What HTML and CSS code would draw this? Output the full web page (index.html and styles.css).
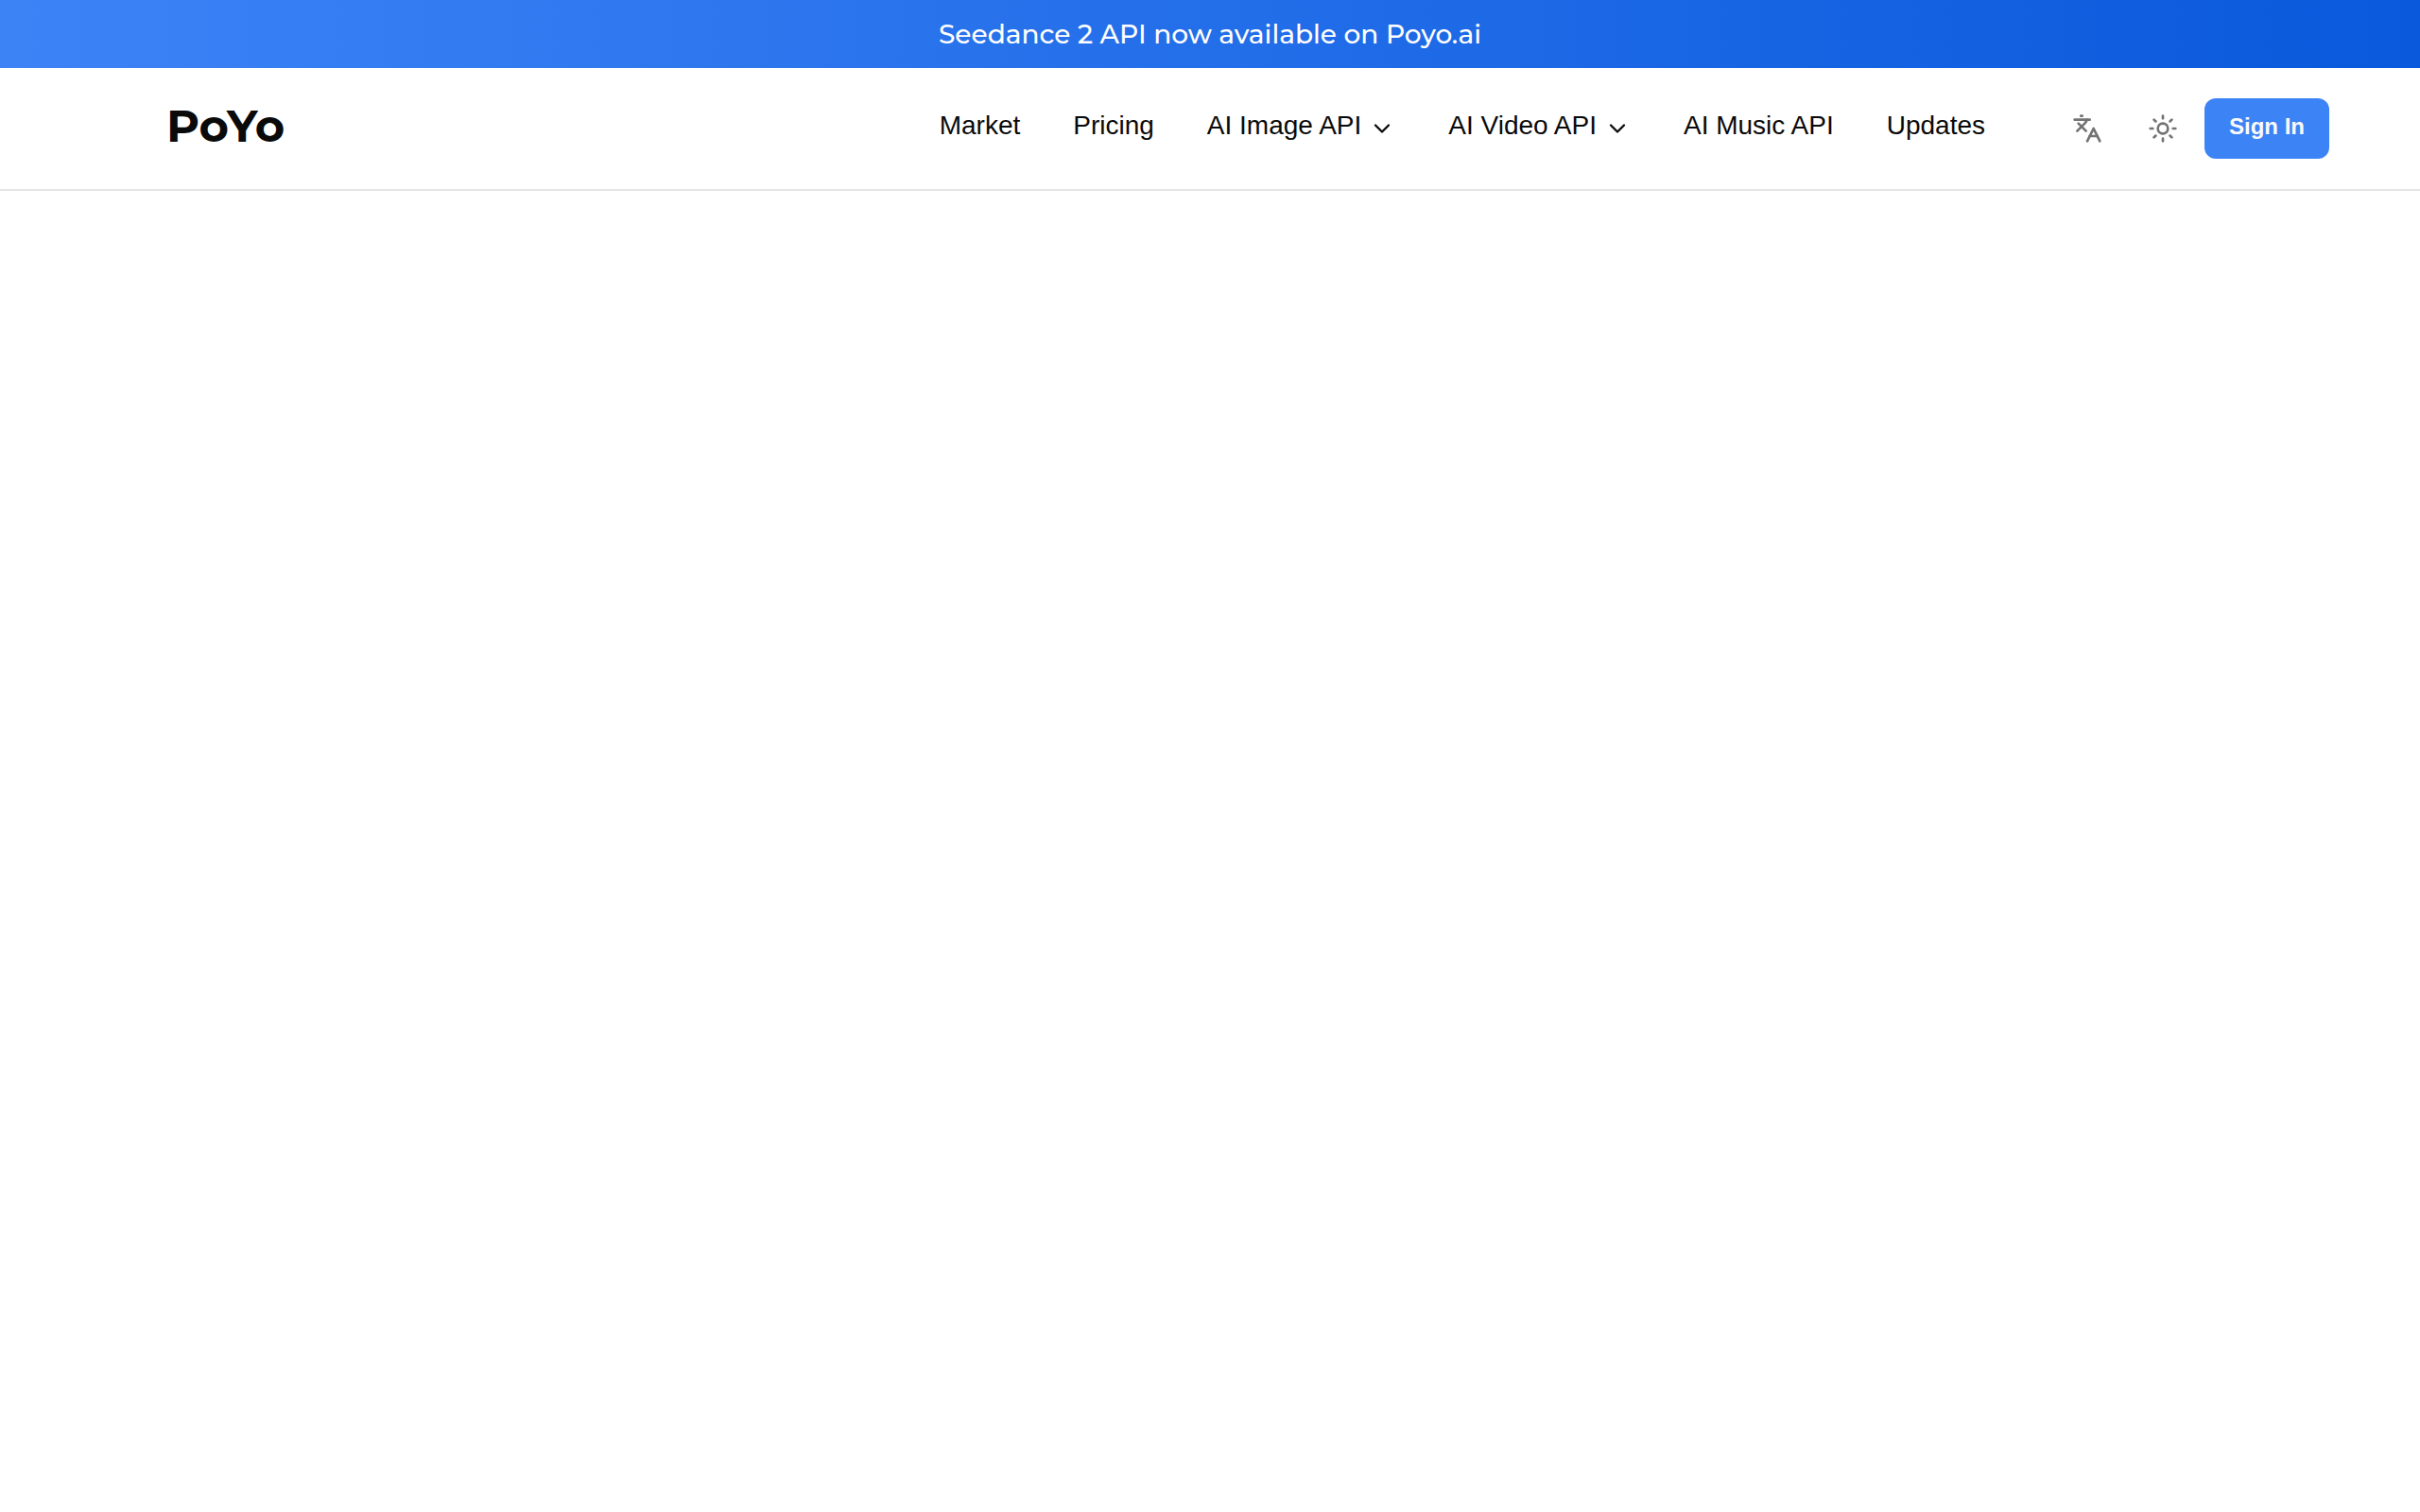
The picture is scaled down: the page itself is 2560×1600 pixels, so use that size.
FILE: index.html
```
<!DOCTYPE html>
<html lang="en">
<head>
    <meta charset="UTF-8">
    <meta name="viewport" content="width=device-width, initial-scale=1.0">
    <title>PoYo</title>
    <link rel="stylesheet" href="styles.css">
</head>
<body>
    <a class="banner" href="#">Seedance 2 API now available on Poyo.ai</a>

    <header class="header">
        <a class="logo" href="#">PoYo</a>

        <nav class="nav">
            <a class="nav-item" href="#">Market</a>
            <a class="nav-item" href="#">Pricing</a>
            <button class="nav-item" type="button">
                <span>AI Image API</span>
                <svg class="chevron" viewBox="0 0 24 24"><path d="m6 9 6 6 6-6"/></svg>
            </button>
            <button class="nav-item" type="button">
                <span>AI Video API</span>
                <svg class="chevron" viewBox="0 0 24 24"><path d="m6 9 6 6 6-6"/></svg>
            </button>
            <a class="nav-item" href="#">AI Music API</a>
            <a class="nav-item" href="#">Updates</a>
        </nav>

        <div class="actions">
            <button class="icon-btn" type="button" aria-label="Language">
                <svg viewBox="0 0 24 24">
                    <path d="m5 8 6 6"/>
                    <path d="m4 14 6-6 2-3"/>
                    <path d="M2 5h12"/>
                    <path d="M7 2h1"/>
                    <path d="m22 22-5-10-5 10"/>
                    <path d="M14 18h6"/>
                </svg>
            </button>
            <button class="icon-btn" type="button" aria-label="Theme">
                <svg viewBox="0 0 24 24">
                    <circle cx="12" cy="12" r="4"/>
                    <path d="M12 2v2"/>
                    <path d="M12 20v2"/>
                    <path d="m4.93 4.93 1.41 1.41"/>
                    <path d="m17.66 17.66 1.41 1.41"/>
                    <path d="M2 12h2"/>
                    <path d="M20 12h2"/>
                    <path d="m6.34 17.66-1.41 1.41"/>
                    <path d="m19.07 4.93-1.41 1.41"/>
                </svg>
            </button>
            <button class="sign-in" type="button">Sign In</button>
        </div>
    </header>

    <main></main>
</body>
</html>
```
FILE: styles.css
```
:root {
    --primary: #3c83f6;
    --primary-dark: #0a59dc;
    --text: #0a0a0a;
    --muted: #737373;
    --border: #e5e5e5;
}

* {
    margin: 0;
    padding: 0;
    box-sizing: border-box;
}

body {
    min-height: 100vh;
    background: #fff;
    color: var(--text);
    font-family: "Liberation Sans", Arial, sans-serif;
    font-size: 28px;
    line-height: 40px;
}

a {
    color: inherit;
    text-decoration: none;
}

button {
    border: none;
    background: none;
    color: inherit;
    font: inherit;
    cursor: pointer;
}

svg {
    display: block;
    width: 32px;
    height: 32px;
    fill: none;
    stroke: currentColor;
    stroke-width: 2;
    stroke-linecap: round;
    stroke-linejoin: round;
}

.banner {
    display: block;
    padding: 16px;
    background: linear-gradient(to right, var(--primary), var(--primary-dark));
    color: #fff;
    font-family: Montserrat, Inter, sans-serif;
    font-weight: 500;
    text-align: center;
}

.header {
    display: flex;
    align-items: center;
    padding: 32px 96px 32px 176px;
    border-bottom: 2px solid var(--border);
}

.logo {
    margin-right: auto;
    padding-bottom: 6px;
    font-family: Montserrat, Inter, sans-serif;
    font-size: 48px;
    font-weight: 700;
    line-height: 56px;
}

.nav {
    display: flex;
    align-items: center;
    gap: 56px;
    margin-right: 72px;
}

.nav-item {
    display: flex;
    align-items: center;
    gap: 8px;
    padding-bottom: 6px;
    white-space: nowrap;
}

.chevron {
    width: 28px;
    height: 28px;
    margin-top: 6px;
}

.actions {
    display: flex;
    align-items: center;
    gap: 8px;
}

.icon-btn {
    display: grid;
    place-items: center;
    width: 72px;
    height: 64px;
    color: var(--muted);
}

.sign-in {
    height: 64px;
    padding: 0 26px 4px;
    border-radius: 12px;
    background: var(--primary);
    color: #fafafa;
    font-size: 24px;
    font-weight: 700;
}
```
